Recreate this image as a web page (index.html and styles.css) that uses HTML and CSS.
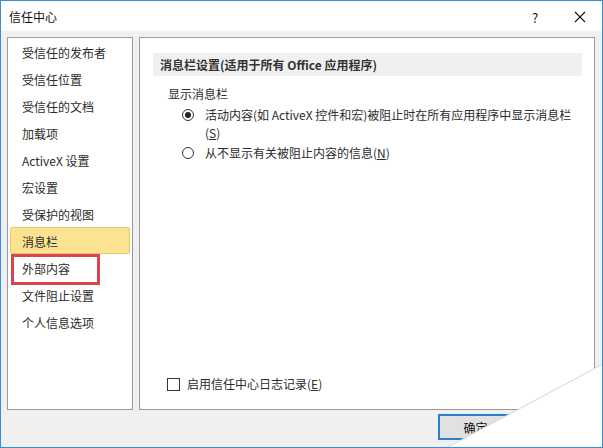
FILE: index.html
```html
<!DOCTYPE html>
<html lang="zh-CN">
<head>
<meta charset="utf-8">
<title>信任中心</title>
<link rel="stylesheet" href="styles.css">
</head>
<body>
<div class="window">
  <div class="titlebar">
    <span class="title">信任中心</span>
    <div class="title-actions">
      <span class="help">?</span>
      <svg class="close" width="12" height="12" viewBox="0 0 12 12"><path d="M1 1L11 11M11 1L1 11" stroke="#111" stroke-width="1.1" fill="none"/></svg>
    </div>
  </div>
  <div class="content">
    <div class="panels">
      <ul class="nav">
        <li>受信任的发布者</li>
        <li>受信任位置</li>
        <li>受信任的文档</li>
        <li>加载项</li>
        <li>ActiveX 设置</li>
        <li>宏设置</li>
        <li>受保护的视图</li>
        <li class="selected">消息栏</li>
        <li class="marked">外部内容<span class="mark"></span></li>
        <li>文件阻止设置</li>
        <li>个人信息选项</li>
      </ul>
      <div class="main">
        <div class="section-head">消息栏设置(适用于所有 Office 应用程序)</div>
        <div class="group-label">显示消息栏</div>
        <div class="option">
          <span class="radio checked"></span>
          <span class="opt-text">活动内容(如 ActiveX 控件和宏)被阻止时在所有应用程序中显示消息栏(<u>S</u>)</span>
        </div>
        <div class="option second">
          <span class="radio"></span>
          <span class="opt-text">从不显示有关被阻止内容的信息(<u>N</u>)</span>
        </div>
        <div class="check-row">
          <span class="checkbox"></span>
          <span>启用信任中心日志记录(<u>E</u>)</span>
        </div>
      </div>
    </div>
    <div class="buttons">
      <button class="btn primary">确定</button>
      <button class="btn">取消</button>
    </div>
  </div>
  <svg class="tear" width="603" height="448" viewBox="0 0 603 448">
    <polygon points="603,364 603,448 446,448" fill="#ffffff"/>
    <line x1="603" y1="364" x2="446" y2="448" stroke="#d4d4d4" stroke-width="1"/>
  </svg>
</div>
</body>
</html>
```
FILE: styles.css
```css
* { box-sizing: border-box; }
html, body { margin: 0; padding: 0; background: #ffffff; }
body {
  font-family: "Noto Sans CJK SC", "Noto Sans", sans-serif;
  font-size: 12px;
  color: #2b2b2b;
}
.window {
  position: relative;
  width: 603px;
  height: 448px;
  border: 1px solid #3f8ccb;
  background: #f0f0f0;
  overflow: hidden;
}
.titlebar {
  height: 30px;
  background: #ffffff;
  display: flex;
  align-items: center;
  justify-content: space-between;
  padding: 0 0 0 8px;
}
.title { font-size: 12px; color: #111; line-height: 30px; padding-top: 2px; }
.title-actions { display: flex; align-items: center; height: 30px; }
.help { font-size: 13px; color: #111; width: 12px; text-align: center; margin-right: 33px; padding-top: 2px; }
.close { margin-right: 16px; margin-top: 2px; }
.content { padding: 6px 7px 0 6px; }
.panels { display: flex; gap: 6px; height: 373px; }
.nav {
  list-style: none;
  margin: 0;
  padding: 0 1px;
  width: 126px;
  background: #ffffff;
  border: 1px solid #9a9a9a;
}
.nav li {
  position: relative;
  height: 27px;
  line-height: 27px;
  padding-left: 12px;
  border: 1px solid transparent;
  border-radius: 2px;
  white-space: nowrap;
}
.nav li.selected {
  background: #fbe391;
  border-color: #e7c766;
  margin: 0 1px;
  padding-left: 11px;
}
.mark {
  position: absolute;
  left: 1px;
  top: -1px;
  width: 89px;
  height: 31px;
  border: 3px solid #e0414f;
}
.main {
  flex: 1;
  background: #ffffff;
  border: 1px solid #9a9a9a;
  padding: 15px 12px 16px 13px;
  display: flex;
  flex-direction: column;
}
.section-head {
  height: 23px;
  line-height: 23px;
  background: #f0f0f0;
  padding-left: 7px;
  font-weight: bold;
  color: #333;
}
.group-label { margin-top: 8px; line-height: 20px; padding-left: 15px; }
.option {
  display: flex;
  align-items: flex-start;
  margin-top: 2px;
  padding-left: 29px;
  line-height: 18px;
}
.option.second { margin-top: 2px; }
.opt-text { width: 372px; }
.radio {
  flex: none;
  width: 12px;
  height: 12px;
  border: 1px solid #333;
  border-radius: 50%;
  margin-top: 3px;
  margin-right: 11px;
  position: relative;
  background: #fff;
}
.radio.checked::after {
  content: "";
  position: absolute;
  left: 2px; top: 2px;
  width: 6px; height: 6px;
  border-radius: 50%;
  background: #222;
}
.check-row {
  margin-top: auto;
  display: flex;
  align-items: center;
  padding-left: 14px;
  line-height: 18px;
}
.checkbox {
  width: 13px;
  height: 13px;
  border: 1px solid #333;
  background: #fff;
  margin-right: 7px;
}
u { text-underline-offset: 1px; }
.buttons {
  display: flex;
  justify-content: flex-end;
  gap: 6px;
  margin-top: 4px;
  padding-right: 1px;
}
.btn {
  width: 75px;
  height: 26px;
  font-family: inherit;
  font-size: 12px;
  color: #111;
  background: #e1e1e1;
  border: 1px solid #adadad;
  padding: 0;
}
.btn.primary { border: 2px solid #2a7fd0; }
.tear { position: absolute; left: -1px; top: -1px; pointer-events: none; }
```
